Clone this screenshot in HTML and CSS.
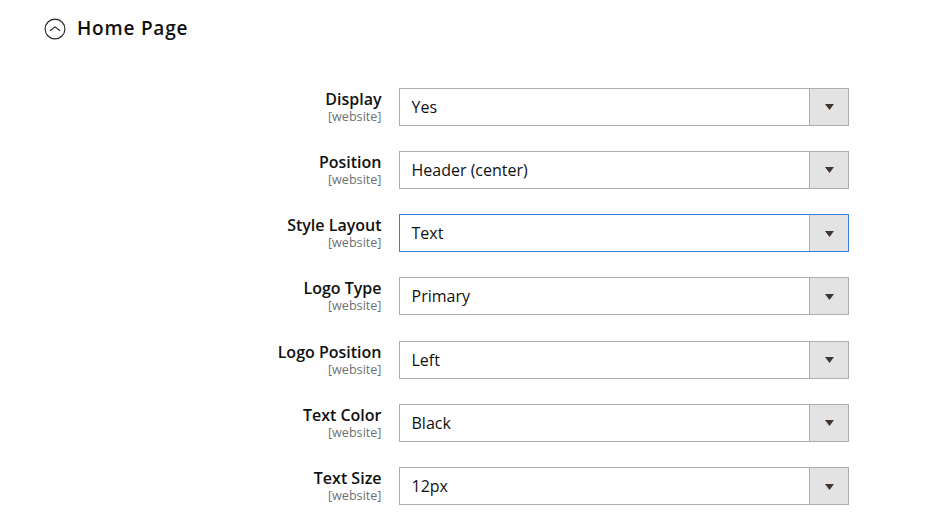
FILE: index.html
```html
<!DOCTYPE html>
<html lang="en">
<head>
<meta charset="utf-8">
<title>Home Page</title>
<link rel="stylesheet" href="styles.css">
</head>
<body>
<section class="section">
<header class="section-head">
<svg class="toggle" viewBox="0 0 22 22" width="22" height="22"><circle cx="11" cy="11" r="9.9"/><path d="M6 12.8 11 8.9l5 3.9"/></svg>
<h1>Home Page</h1>
</header>
<div class="fields">
<div class="field"><div class="label"><strong>Display</strong><span>[website]</span></div><div class="select"><span class="value">Yes</span><span class="arrow"><svg viewBox="0 0 9 6" width="9" height="6"><path d="M0 0h9L4.5 6z"/></svg></span></div></div>
<div class="field"><div class="label"><strong>Position</strong><span>[website]</span></div><div class="select"><span class="value">Header (center)</span><span class="arrow"><svg viewBox="0 0 9 6" width="9" height="6"><path d="M0 0h9L4.5 6z"/></svg></span></div></div>
<div class="field"><div class="label"><strong>Style Layout</strong><span>[website]</span></div><div class="select focused"><span class="value">Text</span><span class="arrow"><svg viewBox="0 0 9 6" width="9" height="6"><path d="M0 0h9L4.5 6z"/></svg></span></div></div>
<div class="field"><div class="label"><strong>Logo Type</strong><span>[website]</span></div><div class="select"><span class="value">Primary</span><span class="arrow"><svg viewBox="0 0 9 6" width="9" height="6"><path d="M0 0h9L4.5 6z"/></svg></span></div></div>
<div class="field"><div class="label"><strong>Logo Position</strong><span>[website]</span></div><div class="select"><span class="value">Left</span><span class="arrow"><svg viewBox="0 0 9 6" width="9" height="6"><path d="M0 0h9L4.5 6z"/></svg></span></div></div>
<div class="field"><div class="label"><strong>Text Color</strong><span>[website]</span></div><div class="select"><span class="value">Black</span><span class="arrow"><svg viewBox="0 0 9 6" width="9" height="6"><path d="M0 0h9L4.5 6z"/></svg></span></div></div>
<div class="field"><div class="label"><strong>Text Size</strong><span>[website]</span></div><div class="select"><span class="value">12px</span><span class="arrow"><svg viewBox="0 0 9 6" width="9" height="6"><path d="M0 0h9L4.5 6z"/></svg></span></div></div>
</div>
</section>
</body>
</html>
```
FILE: styles.css
```css
* { box-sizing: border-box; }
body { margin: 0; background: #fff; color: #111; font-family: "Open Sans", sans-serif; }
.section { height: 528px; overflow: hidden; padding: 14px 0 0 44px; }
.section-head { display: flex; align-items: center; gap: 11px; height: 28px; }
.toggle { margin-top: 1px; fill: none; stroke: #222; stroke-width: 1.1; }
h1 { margin: 0; padding-bottom: 1px; font-size: 19px; line-height: 26px; font-weight: 600; letter-spacing: .8px; }
.fields { display: grid; gap: 25.28px; padding-top: 45.6px; }
.field { display: grid; grid-template-columns: 337.5px 450px; column-gap: 17.5px; height: 38px; }
.label { display: flex; flex-direction: column; align-items: flex-end; }
.label strong { font-size: 16px; font-weight: 600; line-height: 22px; }
.label span { font-size: 12.6px; line-height: 13px; color: #707070; }
.select { display: flex; height: 38px; border: 1px solid #adadad; }
.value { flex: 1; padding-left: 11.5px; font-size: 16px; line-height: 37px; }
.arrow { display: flex; align-items: center; justify-content: center; width: 39px; padding-top: 1px; background: #e3e3e3; border-left: 1px solid #adadad; }
.arrow svg { fill: #41362f; }
.focused { border-color: #3c7dd8; }
```
